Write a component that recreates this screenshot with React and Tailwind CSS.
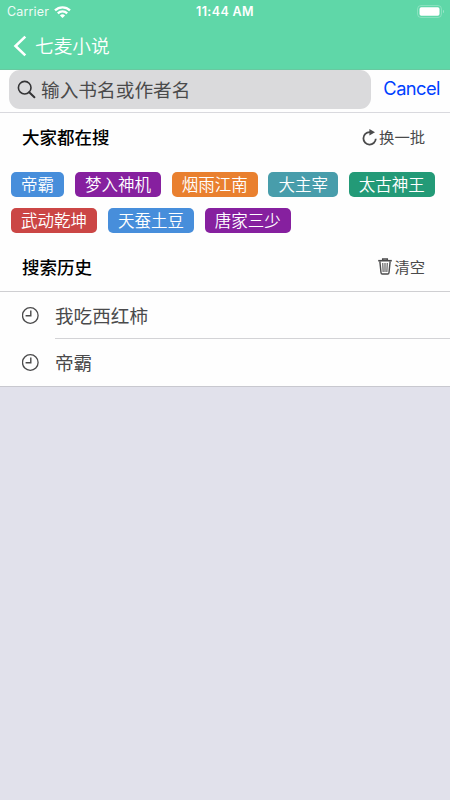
const hotWords = [
  { name: "帝霸", color: "bg-[#478edb]" },
  { name: "梦入神机", color: "bg-[#86209f]" },
  { name: "烟雨江南", color: "bg-[#e9802f]" },
  { name: "大主宰", color: "bg-[#489dab]" },
  { name: "太古神王", color: "bg-[#239a77]" },
  { name: "武动乾坤", color: "bg-[#cb4645]" },
  { name: "天蚕土豆", color: "bg-[#478edb]" },
  { name: "唐家三少", color: "bg-[#86209f]" },
];

const history = ["我吃西红柿", "帝霸"];

function StatusBar() {
  return (
    <div className="h-[23px] pl-[7px] pr-[6px] grid grid-cols-3 items-center text-white font-['Inter','Liberation_Sans',sans-serif]">
      <div className="flex items-center gap-[5px]">
        <span className="text-[12.5px] leading-[24px] tracking-[0.15px] opacity-90">Carrier</span>
        <svg className="w-[17px] h-3 mb-px" viewBox="0 0 17 12" fill="none" stroke="currentColor" strokeWidth="2.3">
          <path d="M1 4.4a10.8 10.8 0 0 1 15 0" />
          <path d="M3.8 7.3a6.8 6.8 0 0 1 9.4 0" />
          <path d="M8.5 12 5.9 9.4a3.8 3.8 0 0 1 5.2 0Z" fill="currentColor" stroke="none" />
        </svg>
      </div>
      <span className="text-center text-[12.5px] leading-[24px] font-semibold tracking-[0.35px] whitespace-nowrap -ml-px">11:44 AM</span>
      <svg className="w-[27px] h-[13px] mb-[2px] justify-self-end" viewBox="0 0 27 13" fill="none">
        <rect x="0.5" y="0.5" width="24" height="12" rx="3.5" stroke="#fff" strokeOpacity="0.25" />
        <rect x="2.5" y="2.3" width="20" height="8.4" rx="1.8" fill="#fff" />
        <path d="M26 4.7c1 .6 1 3 0 3.6Z" fill="#fff" fillOpacity="0.5" />
      </svg>
    </div>
  );
}

function NavBar() {
  return (
    <div className="h-[46px] pl-[13px] flex items-center text-white">
      <svg className="w-[14px] h-[22px]" viewBox="0 0 14 22" fill="none" stroke="currentColor" strokeWidth="2.6">
        <path d="M12.3 1.6 2.5 11l9.8 9.4" />
      </svg>
      <h1 className="ml-2 pb-[2px] text-[18.7px] leading-6 font-[350]">七麦小说</h1>
    </div>
  );
}

function SearchBar() {
  return (
    <div className="h-[43px] pl-[9px] pr-[10px] flex items-start justify-between border-b border-[#d9d9de]">
      <div className="w-[362px] h-[39px] pl-2 flex items-center rounded-[11px] bg-[#dadadc] text-[#4a4a4b]">
        <svg className="w-[19px] h-[19px]" viewBox="0 0 19 19" fill="none" stroke="#343436" strokeWidth="1.6">
          <circle cx="7.7" cy="7.7" r="6.3" />
          <path d="m12.2 12.2 5.2 5" strokeWidth="2" strokeLinecap="round" />
        </svg>
        <span className="ml-[5px] pb-[2px] text-[18.7px] leading-[37px]">输入书名或作者名</span>
      </div>
      <button className="text-[18.3px] leading-[37px] text-[#0040ff] font-['Inter','Liberation_Sans',sans-serif] tracking-[-0.55px]">
        Cancel
      </button>
    </div>
  );
}

function SectionHeader({ title, action, icon, className }) {
  return (
    <div className={`pl-[22px] pr-[25px] flex items-center justify-between ${className}`}>
      <h2 className="text-[17.5px] leading-6 font-medium text-black">{title}</h2>
      <button className="flex items-center text-[15.3px] text-[#4a4a4b]">
        {icon}
        <span className="leading-[22px] pb-[2px]">{action}</span>
      </button>
    </div>
  );
}

function RefreshIcon() {
  return (
    <svg className="w-[15px] h-[17px] mr-[2px]" viewBox="0 0 15 17" fill="none" stroke="currentColor" strokeWidth="1.8">
      <path d="M9 3.2H7.6a6.2 6.2 0 1 0 6.2 6.6" />
      <path d="M7.4 0 13 3.2 7.4 6.4Z" fill="currentColor" stroke="none" />
    </svg>
  );
}

function TrashIcon() {
  return (
    <svg className="w-[14px] h-[17px] mr-[2px] mb-px" viewBox="0 0 15 17" preserveAspectRatio="none" fill="none" stroke="currentColor" strokeWidth="1.5">
      <path d="M.2 2.7h14.6" strokeWidth="1.6" />
      <path d="M5 2.4V1h5v1.4" />
      <path d="m2 3.4 1.2 11.1q.1 1.6 1.4 1.6h5.8q1.3 0 1.4-1.6L13 3.4" />
      <path d="m5.1 5 .4 9M7.5 5v9M9.9 5l-.4 9" strokeWidth="1.1" />
    </svg>
  );
}

function ClockIcon() {
  return (
    <svg className="w-[17px] h-[17px]" viewBox="0 0 17 17" fill="none" stroke="#4a4a4b" strokeWidth="1.3">
      <circle cx="8.3" cy="8.5" r="7.8" />
      <path d="M8.8 3.5v5.2H3.6" strokeWidth="1.4" />
    </svg>
  );
}

export default function App() {
  return (
    <div className="w-full h-screen overflow-hidden bg-[#e1e1eb] font-['Noto_Sans_CJK_SC',sans-serif]">
      <header className="h-[70px] bg-[#5fd7a8] border-b border-[#68c9a0]">
        <StatusBar />
        <NavBar />
      </header>

      <main className="bg-[#fefefe]">
        <SearchBar />

        <SectionHeader className="h-12" title="大家都在搜" action="换一批" icon={<RefreshIcon />} />

        <div className="pt-[10.5px] pl-[11px] flex flex-wrap gap-x-[10.6px] gap-y-[10.5px]">
          {hotWords.map((word) => (
            <span
              key={word.name}
              className={`h-[25.5px] px-[10.1px] rounded-[5px] text-[16.5px] leading-[25px] font-[350] text-white ${word.color}`}
            >
              {word.name}
            </span>
          ))}
        </div>

        <SectionHeader
          className="h-[58.5px] pt-[11px] border-b border-[#cfcfd2]"
          title="搜索历史"
          action="清空"
          icon={<TrashIcon />}
        />

        <ul className="border-b border-[#c8c8cf]">
          {history.map((item, i) => (
            <li key={item} className="h-[47px] pl-[22px] flex items-center">
              <ClockIcon />
              <span
                className={`ml-4 flex-1 h-full text-[18.6px] leading-[46px] text-[#4a4a4b] ${
                  i < history.length - 1 ? "border-b border-[#d3d3d6]" : ""
                }`}
              >
                {item}
              </span>
            </li>
          ))}
        </ul>
      </main>
    </div>
  );
}
